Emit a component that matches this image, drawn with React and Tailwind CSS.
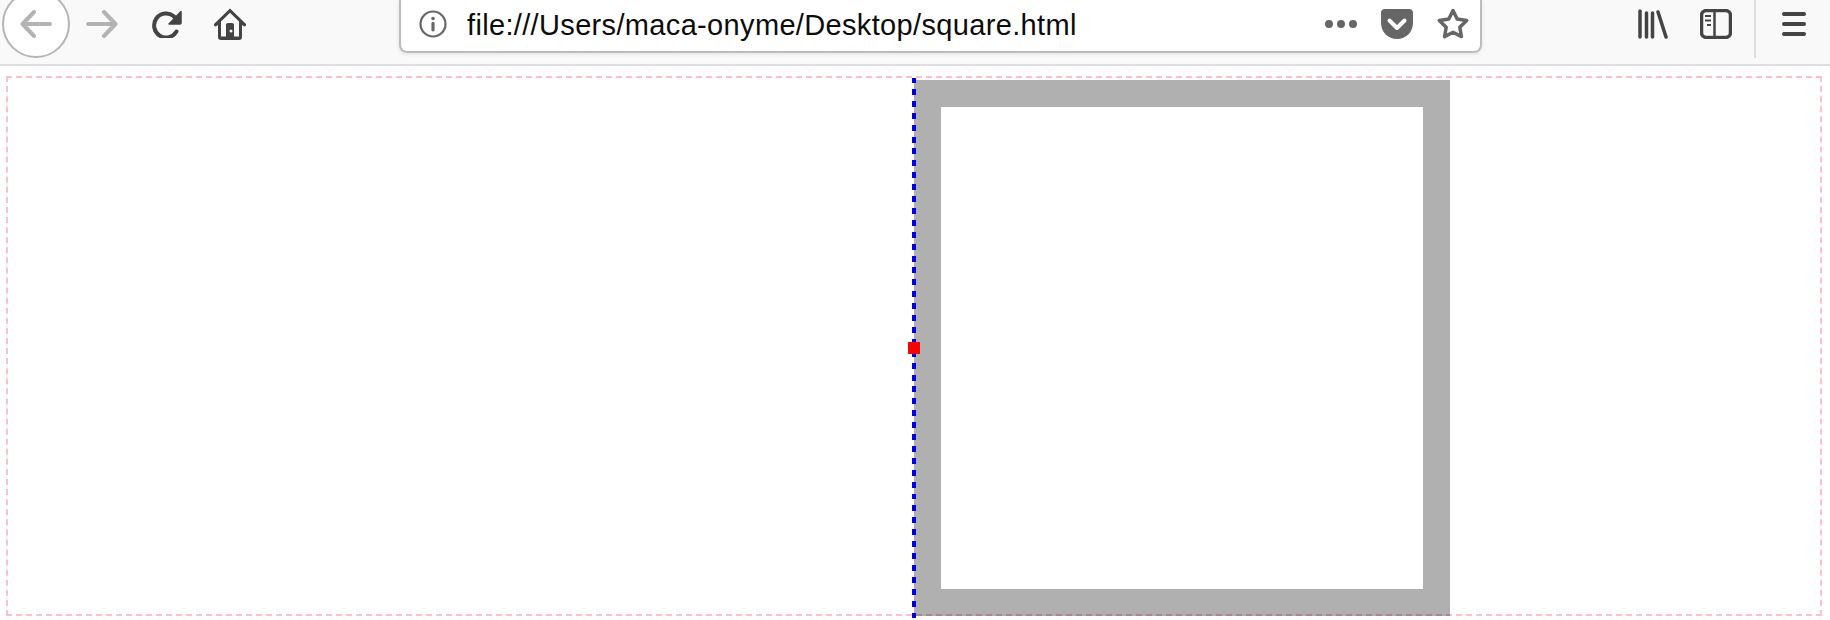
export default function App() {
  return (
    <div className="w-[1830px] h-[620px] overflow-hidden bg-white font-['Liberation_Sans',sans-serif]">
      <header className="h-[66px] border-b-2 border-[#e0e0e1] bg-[#f9f9fa] overflow-hidden">
        <div className="flex items-center h-12">
          <div className="ml-[2px] w-[68px] h-[68px] flex-none rounded-full border-2 border-[#b5b5b5] bg-white flex items-center justify-center">
            <svg width="32" height="28" viewBox="0 0 32 28" fill="none" stroke="#b3b3b3" strokeWidth="4" strokeLinecap="round" strokeLinejoin="round">
              <path d="M30 14H3M14 2L2.500 14 14 26" />
            </svg>
          </div>
          <svg className="ml-[16px] flex-none" width="32" height="28" viewBox="0 0 32 28" fill="none" stroke="#b3b3b3" strokeWidth="4" strokeLinecap="round" strokeLinejoin="round">
            <path d="M2 14h27M18 2l11.500 12L18 26" />
          </svg>
          <svg className="ml-[32px] flex-none" width="32" height="28" viewBox="0 0 32 28" fill="none">
            <path d="M26.500 21.500A12 12 0 1 1 23.500 6L27 9.500" stroke="#444" strokeWidth="4" strokeLinecap="round" />
            <path d="M31 1.500v11.500a1 1 0 0 1-1 1H19z" fill="#444" stroke="#444" strokeWidth="1.500" strokeLinejoin="round" />
          </svg>
          <svg className="ml-[32px] flex-none" width="32" height="32" viewBox="0 0 32 32">
            <path fill="#444" fillRule="evenodd" d="M16 0.500L31.500 15.500a1.600 1.600 0 0 1-2 2.500L28 17v12a3 3 0 0 1-3 3H7a3 3 0 0 1-3-3V17l-1.500 1a1.600 1.600 0 0 1-2-2.500L16 0.500zM16 4.800L7 13.500V28.500h5V17a2 2 0 0 1 2-2h4a2 2 0 0 1 2 2v11.500h5V13.500z" />
            <path fill="#444" d="M12 16h8v13h-8z" />
            <circle cx="17" cy="23" r="1.500" fill="#f9f9fa" />
          </svg>

          <div className="ml-[153px] w-[1083px] h-[53px] flex-none self-start flex items-start pl-[18px] bg-white border-x-2 border-b-2 border-[#bdbdbd] rounded-b-lg shadow-[0_1px_4px_rgba(0,0,0,0.1)]">
            <div className="flex items-center h-12 w-full">
              <svg className="flex-none" width="28" height="28" viewBox="0 0 28 28">
                <circle cx="14" cy="14" r="12.500" fill="none" stroke="#666" strokeWidth="2.200" />
                <circle cx="14" cy="8.500" r="1.800" fill="#666" />
                <rect x="12.400" y="12" width="3.200" height="9.500" rx="1.400" fill="#666" />
              </svg>
              <span className="ml-[20px] mt-[2px] text-[29px] tracking-[0.34px] leading-none text-[#0c0c0d] whitespace-nowrap">file:///Users/maca-onyme/Desktop/square.html</span>
              <svg className="ml-auto flex-none" width="32" height="10" viewBox="0 0 32 10" fill="#666">
                <circle cx="4" cy="5" r="4" />
                <circle cx="16" cy="5" r="4" />
                <circle cx="28" cy="5" r="4" />
              </svg>
              <svg className="ml-[24px] flex-none" width="32" height="30" viewBox="0 0 32 30">
                <path fill="#666" d="M4 0h24a4 4 0 0 1 4 4v10c0 9-7 16-16 16S0 23 0 14V4a4 4 0 0 1 4-4z" />
                <path fill="none" stroke="#fff" strokeWidth="4" strokeLinecap="round" strokeLinejoin="round" d="M8.500 11.500L16 19l7.500-7.500" />
              </svg>
              <svg className="ml-[24px] mr-[11px] flex-none" width="32" height="32" viewBox="0 0 32 32">
                <path fill="none" stroke="#666" strokeWidth="3.500" strokeLinejoin="round" d="M16 2.500l4.200 8.600 9.500 1.400-6.900 6.700 1.600 9.400L16 24.200 7.600 28.600l1.600-9.400-6.900-6.700 9.500-1.400z" />
              </svg>
            </div>
          </div>

          <svg className="ml-[156px] flex-none" width="30" height="30" viewBox="0 0 30 30" fill="none" stroke="#444" strokeWidth="3.500" strokeLinecap="round">
            <path d="M2 2v26M8.500 4v24M14.500 4v24M20 3l8 25" />
          </svg>
          <svg className="ml-[32px] flex-none" width="32" height="30" viewBox="0 0 32 30">
            <rect x="1.500" y="1.500" width="29" height="27" rx="5" fill="none" stroke="#444" strokeWidth="3.500" />
            <path d="M14.500 2v26" stroke="#444" strokeWidth="2.500" />
            <path d="M5 7h6M5 11.500h6M7 16h4" stroke="#444" strokeWidth="2" />
          </svg>
          <div className="ml-[22px] w-[2px] h-[58px] flex-none self-start bg-[#dedede]" />
          <svg className="ml-[26px] flex-none" width="24" height="26" viewBox="0 0 24 26" fill="none" stroke="#444" strokeWidth="4" strokeLinecap="round">
            <path d="M2 3h20M2 13h20M2 23h20" />
          </svg>
        </div>
      </header>

      <main className="pt-[10px] px-[6px]">
        <div className="flex w-[1816px] pt-[2px] border-2 border-dashed border-[#ffc0cb]">
          <div className="w-1/2 flex-none" />
          <div className="relative -mb-[2px]">
            <div className="w-[536px] h-[536px] border-[27px] border-[rgba(0,0,0,0.31)]" />
            <div className="absolute -left-[2px] -top-[2px] w-1 h-[540px] bg-[repeating-linear-gradient(to_bottom,#0000e6_0,#0000e6_5px,transparent_5px,transparent_11px,#0000e6_11px,#0000e6_11.900px)]" />
            <div className="absolute -left-[6px] top-[262px] w-3 h-3 bg-[#ff0000]" />
          </div>
        </div>
      </main>
    </div>
  );
}
